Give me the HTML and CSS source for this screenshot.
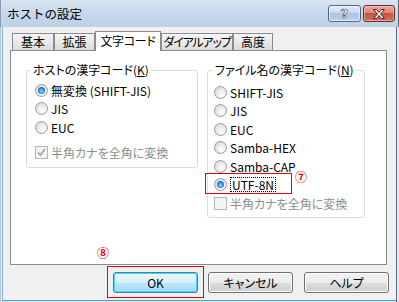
FILE: index.html
```html
<!DOCTYPE html>
<html lang="ja">
<head>
<meta charset="utf-8">
<title>ホストの設定</title>
<link rel="stylesheet" href="styles.css">
</head>
<body>
<div class="window">
  <div class="titlebar">
    <span class="title">ホストの設定</span>
    <div class="caption">
      <span class="cbtn help"><span class="q">?</span></span>
      <span class="cbtn close">
        <svg width="16" height="12" viewBox="0 0 16 12"><path d="M2.5 1.5h3l2.5 3 2.5-3h3l-4 4.5 4 4.5h-3l-2.5-3-2.5 3h-3l4-4.5z" fill="#fff" stroke="#4a2323" stroke-width="1" stroke-linejoin="round"/></svg>
      </span>
    </div>
  </div>
  <div class="client">
    <div class="tabs">
      <div class="tab t1">基本</div>
      <div class="tab t2">拡張</div>
      <div class="tab t3 sel">文字コード</div>
      <div class="tab t4">ダイアルアップ</div>
      <div class="tab t5">高度</div>
    </div>
    <div class="panel">
      <fieldset class="group g-left">
        <legend>ホストの漢字コード(<u>K</u>)</legend>
        <div class="opts">
          <div class="row"><span class="radio on"></span><span>無変換 (SHIFT-JIS)</span></div>
          <div class="row"><span class="radio"></span><span>JIS</span></div>
          <div class="row"><span class="radio"></span><span>EUC</span></div>
          <div class="row chkrow disabled"><span class="check"><svg width="11" height="11" viewBox="0 0 11 11"><path d="M2 5.5l2.3 2.6L9 2" fill="none" stroke="#a6a6a6" stroke-width="1.8"/></svg></span><span>半角カナを全角に変換</span></div>
        </div>
      </fieldset>
      <fieldset class="group g-right">
        <legend>ファイル名の漢字コード(<u>N</u>)</legend>
        <div class="opts">
          <div class="row"><span class="radio"></span><span>SHIFT-JIS</span></div>
          <div class="row"><span class="radio"></span><span>JIS</span></div>
          <div class="row"><span class="radio"></span><span>EUC</span></div>
          <div class="row"><span class="radio"></span><span>Samba-HEX</span></div>
          <div class="row"><span class="radio"></span><span>Samba-CAP</span></div>
          <div class="row"><span class="radio on"></span><span class="focus">UTF-8N</span></div>
          <div class="row disabled"><span class="check"></span><span>半角カナを全角に変換</span></div>
        </div>
      </fieldset>
    </div>
    <div class="buttons">
      <span class="btn def b-ok">OK</span>
      <span class="btn b-cancel">キャンセル</span>
      <span class="btn b-help">ヘルプ</span>
    </div>
  </div>
  <div class="mark box-utf"></div>
  <span class="num n7">⑦</span>
  <div class="mark box-ok"></div>
  <span class="num n8">⑧</span>
</div>
</body>
</html>
```
FILE: styles.css
```css
* { box-sizing: border-box; }
body { margin: 0; background: #fff; }

.window {
  position: relative;
  width: 399px;
  height: 302px;
  background: #f0f0f0;
  font-family: "Noto Sans CJK JP", "Noto Sans", sans-serif;
  font-size: 12px;
  color: #000;
  font-feature-settings: "palt";
  overflow: hidden;
  box-shadow:
    inset 1px 0 #b9c3ce,
    inset 2px 0 #e9eef4,
    inset 3px 0 #86b8dd,
    inset -1px 0 #e2e8ee,
    inset -2px 0 #e2e8ee,
    inset -3px 0 #5b6877,
    inset 0 -1px #d9e9f5,
    inset 0 -2px #38aadb;
}

.titlebar {
  height: 27px;
  display: flex;
  align-items: flex-start;
  padding-left: 6px;
  background: linear-gradient(#d9e5f2, #c3d5ea 60%, #bcd0e7);
  border-left: 1px solid #8a9bb0;
  border-right: 1px solid #5b6877;
}
.title {
  font-size: 12.5px;
  line-height: 27px;
  font-feature-settings: normal;
}
.caption {
  margin-left: auto;
  margin-top: 5px;
  margin-right: 3px;
  display: flex;
  gap: 2px;
}
.cbtn {
  height: 17px;
  border-radius: 3px;
  display: flex;
  align-items: center;
  justify-content: center;
}
.help {
  width: 33px;
  border: 1px solid #55677e;
  background: linear-gradient(#e2ebf6, #c6d7ec 50%, #aec5e1 50%, #b9cfe8);
  box-shadow: inset 0 0 0 1px rgba(255,255,255,0.6);
}
.q {
  font-family: "DejaVu Sans", sans-serif;
  font-weight: bold;
  font-size: 13px;
  line-height: 14px;
  color: #fff;
  -webkit-text-stroke: 0.6px #3b4a5c;
}
.close {
  width: 32px;
  border: 1px solid #6b2c24;
  background: linear-gradient(#e9a99b, #d98473 50%, #c4533f 50%, #d0705c);
  box-shadow: inset 0 0 0 1px rgba(255,220,210,0.5);
}

.client {
  padding: 4px 0 0 10px;
}

.tabs {
  display: flex;
  align-items: flex-end;
  height: 19px;
  padding-left: 2px;
  position: relative;
  z-index: 1;
}
.tab {
  height: 17px;
  border: 1px solid #898c95;
  border-bottom: none;
  background: linear-gradient(#f6f6f6, #e9e9e9 50%, #dcdcdc 100%);
  text-align: center;
  line-height: 16px;
  white-space: nowrap;
  overflow: hidden;
}
.t1 { width: 42px; }
.t2 { width: 41px; }
.t3 { width: 66px; }
.t4 { width: 72px; letter-spacing: -1.2px; }
.t5 { width: 40px; }
.tab.sel {
  height: 20px;
  margin-bottom: -1px;
  background: #fff;
  line-height: 17px;
  letter-spacing: -0.3px;
}

.panel {
  width: 377px;
  height: 215px;
  border: 1px solid #898c95;
  background: #fff;
  display: flex;
  align-items: flex-start;
  gap: 9px;
  padding: 11px 0 0 15px;
}

.group {
  margin: 0;
  padding: 0;
  border: 1px solid #d5dfe5;
  border-radius: 3px;
  min-width: 0;
}
.group legend {
  padding: 0 2px;
  line-height: 16px;
}
.g-left { width: 172px; height: 106px; }
.g-left legend { margin-left: 4px; }
.g-left .opts { padding: 3px 0 0 8px; }
.g-right { width: 158px; height: 156px; }
.g-right legend { margin-left: 5px; }
.g-right .opts { padding: 5px 0 0 6px; }

.row {
  display: flex;
  align-items: center;
  height: 18.5px;
  white-space: nowrap;
}
.chkrow { margin-top: 6.5px; }
.disabled { color: #8d8d8d; }

.radio {
  position: relative;
  flex: none;
  width: 13px;
  height: 13px;
  margin-right: 3px;
  border-radius: 50%;
  border: 1px solid #9a9a9a;
  background: radial-gradient(circle at 62% 68%, #fefefe 0, #ececec 45%, #cdcdcd 100%);
}
.radio.on::after {
  content: "";
  position: absolute;
  left: 2px;
  top: 2px;
  width: 7px;
  height: 7px;
  border-radius: 50%;
  background: radial-gradient(circle at 50% 60%, #8fe0ff 0, #2c92da 45%, #0c3f86 100%);
}

.check {
  flex: none;
  width: 13px;
  height: 13px;
  margin-right: 3px;
  border: 1px solid #b5b5b5;
  background: #f4f4f4;
  display: flex;
  align-items: center;
  justify-content: center;
}

.focus {
  border: 1px dotted #000;
  padding: 0 1px;
  line-height: 13px;
  height: 15px;
}

.buttons {
  display: flex;
  margin-top: 7px;
  padding-left: 103px;
}
.btn {
  width: 85px;
  height: 21px;
  border: 1px solid #707070;
  border-radius: 3px;
  background: linear-gradient(#f2f2f2, #ebebeb 50%, #dddddd 50%, #cfcfcf);
  box-shadow: inset 0 0 0 1px #fbfbfb;
  text-align: center;
  line-height: 19px;
}
.b-cancel { margin-left: 10px; }
.b-help { margin-left: 11px; }
.btn.def {
  border-color: #3c7fb1;
  background: linear-gradient(#eaf6fd, #d9f0fc 50%, #bee6fd 50%, #a7d9f5);
  box-shadow: inset 0 0 0 1px #48d8fb;
}

.mark {
  position: absolute;
  border: 1px solid #e5000f;
}
.box-utf { left: 205px; top: 173px; width: 87px; height: 21px; }
.box-ok { left: 107px; top: 266px; width: 97px; height: 32px; }

.num {
  position: absolute;
  width: 14px;
  height: 14px;
  line-height: 14px;
  text-align: center;
  color: #e5000f;
  font-size: 12px;
  font-weight: bold;
}
.n7 { left: 294px; top: 170px; }
.n8 { left: 96px; top: 246px; }
```
